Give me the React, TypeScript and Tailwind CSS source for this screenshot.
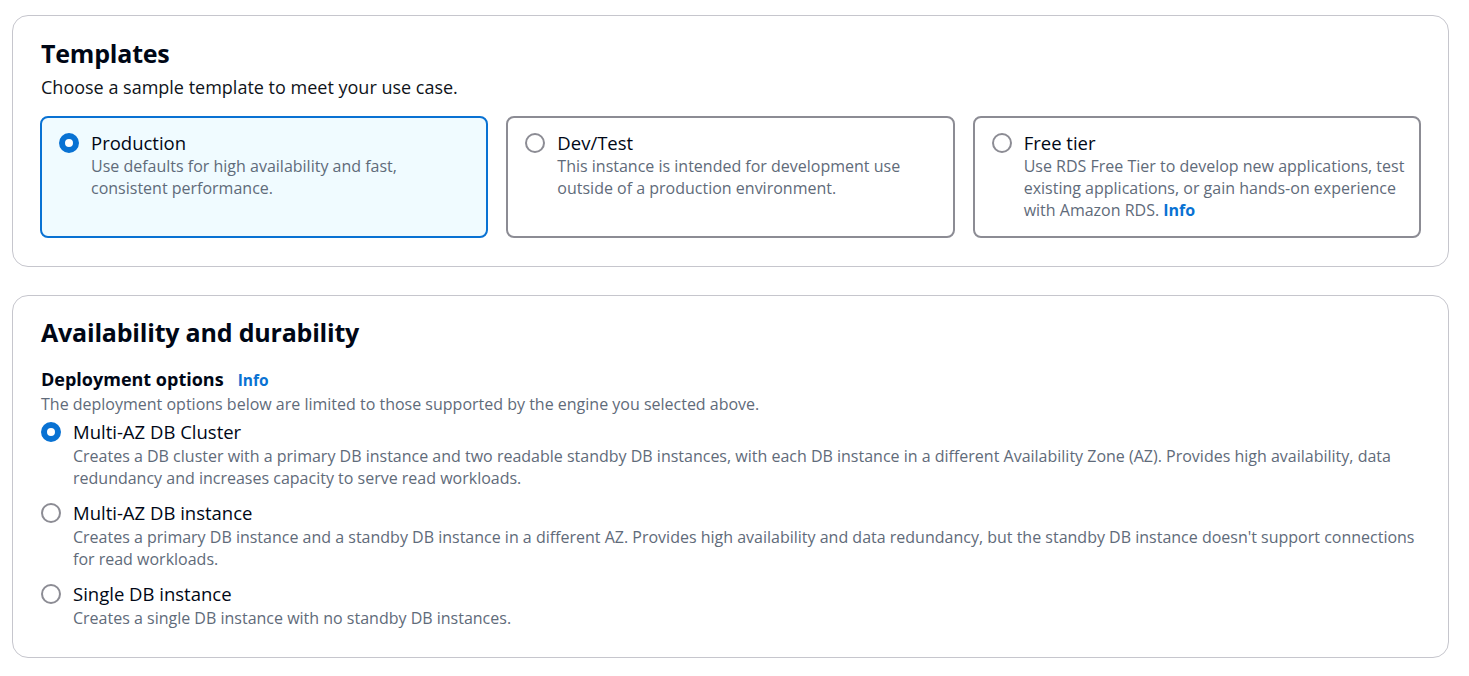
import React, { useState } from "react";

const templates = [
  {
    id: "production",
    label: "Production",
    description: "Use defaults for high availability and fast, consistent performance.",
  },
  {
    id: "devtest",
    label: "Dev/Test",
    description: "This instance is intended for development use outside of a production environment.",
  },
  {
    id: "free",
    label: "Free tier",
    description:
      "Use RDS Free Tier to develop new applications, test existing applications, or gain hands-on experience with Amazon RDS.",
    info: true,
  },
];

const deployments = [
  {
    id: "cluster",
    label: "Multi-AZ DB Cluster",
    description:
      "Creates a DB cluster with a primary DB instance and two readable standby DB instances, with each DB instance in a different Availability Zone (AZ). Provides high availability, data redundancy and increases capacity to serve read workloads.",
  },
  {
    id: "multi",
    label: "Multi-AZ DB instance",
    description:
      "Creates a primary DB instance and a standby DB instance in a different AZ. Provides high availability and data redundancy, but the standby DB instance doesn't support connections for read workloads.",
  },
  {
    id: "single",
    label: "Single DB instance",
    description: "Creates a single DB instance with no standby DB instances.",
  },
];

const Radio: React.FC<{ checked: boolean }> = ({ checked }) =>
  checked ? (
    <span className="block w-[20px] h-[20px] rounded-full border-[6px] border-[#0972d3] bg-white shrink-0" />
  ) : (
    <span className="block w-[20px] h-[20px] rounded-full border-[2px] border-[#8c8c94] bg-white shrink-0" />
  );

const App: React.FC = () => {
  const [template, setTemplate] = useState("production");
  const [deployment, setDeployment] = useState("cluster");

  return (
    <div
      className="bg-white min-h-screen pl-[12px] pr-[20px] pt-[15px] pb-[18px] text-[#000716]"
      style={{ fontFamily: '"Open Sans", "Noto Sans", sans-serif' }}
    >
      {/* Templates */}
      <div className="border border-[#c6c6cd] rounded-[16px] px-[27px] pt-[20px] pb-[28px]">
        <h2 className="text-[25px] leading-[34px] font-bold tracking-[-0.2px] pl-[1px]">Templates</h2>
        <p className="text-[18px] leading-[24px] mt-[5px] pl-[1px] text-[#0f141a]">
          Choose a sample template to meet your use case.
        </p>
        <div className="grid grid-cols-3 gap-[18px] mt-[17px]">
          {templates.map((t) => {
            const selected = template === t.id;
            return (
              <div
                key={t.id}
                onClick={() => setTemplate(t.id)}
                className={`h-[122px] rounded-[8px] border-[2px] pl-[17px] pr-[12px] pt-[13px] cursor-pointer ${
                  selected ? "border-[#0972d3] bg-[#f0fbff]" : "border-[#8c8c94] bg-white"
                }`}
              >
                <div className="flex gap-[12px]">
                  <div className="pt-[2px]">
                    <Radio checked={selected} />
                  </div>
                  <div>
                    <div className="text-[18.5px] leading-[24px]">{t.label}</div>
                    <div className="text-[16px] leading-[22px] text-[#5f6b7a]">
                      {t.description}
                      {t.info && (
                        <>
                          {" "}
                          <span className="text-[#0972d3] font-bold">Info</span>
                        </>
                      )}
                    </div>
                  </div>
                </div>
              </div>
            );
          })}
        </div>
      </div>

      {/* Availability and durability */}
      <div className="border border-[#c6c6cd] rounded-[16px] px-[28px] pt-[19px] pb-[28px] mt-[28px]">
        <h2 className="text-[25px] leading-[34px] font-bold tracking-[-0.2px]">
          Availability and durability
        </h2>
        <div className="mt-[18px] flex items-baseline gap-[14px]">
          <span className="text-[18px] leading-[24px] font-bold">Deployment options</span>
          <span className="text-[15.5px] font-bold text-[#0972d3]">Info</span>
        </div>
        <p className="text-[16px] leading-[22px] mt-[1px] text-[#5f6b7a]">
          The deployment options below are limited to those supported by the engine you selected above.
        </p>
        <div className="flex flex-col gap-[12px] mt-[5px]">
          {deployments.map((d) => (
            <div
              key={d.id}
              onClick={() => setDeployment(d.id)}
              className="flex gap-[12px] cursor-pointer"
            >
              <div className="pt-[2px]">
                <Radio checked={deployment === d.id} />
              </div>
              <div>
                <div className="text-[18.5px] leading-[24px]">{d.label}</div>
                <div className="text-[16px] leading-[22px] mt-[1px] text-[#5f6b7a]">{d.description}</div>
              </div>
            </div>
          ))}
        </div>
      </div>
    </div>
  );
};

export default App;
